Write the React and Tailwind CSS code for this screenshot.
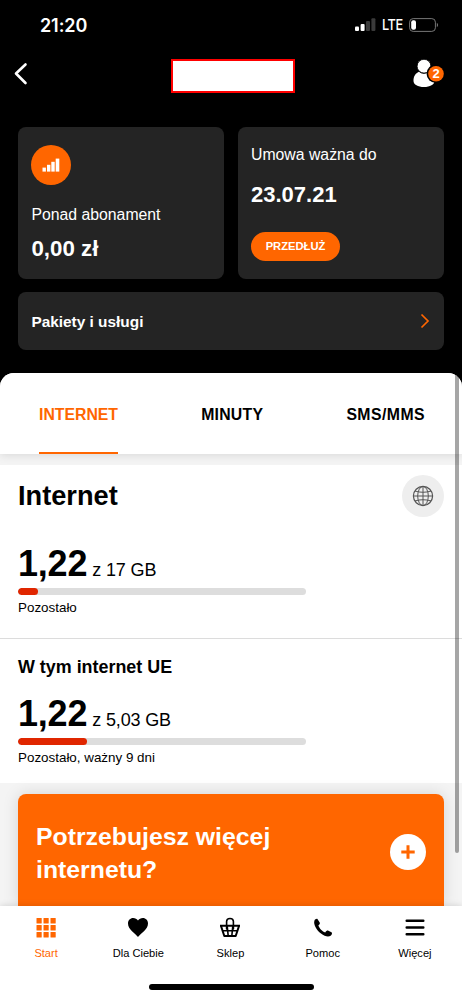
import { useState } from 'react'

const tabs = [
  { id: 'internet', label: 'INTERNET', spacing: 'tracking-[0]' },
  { id: 'minuty', label: 'MINUTY', spacing: 'tracking-[0.25px]' },
  { id: 'sms', label: 'SMS/MMS', spacing: 'tracking-[0.45px]' },
]

const SignalIcon = () => (
  <svg width="21" height="14" viewBox="0 0 21 14">
    <rect x="0" y="8.5" width="4" height="4.5" rx="1" fill="#fff" />
    <rect x="5.6" y="6" width="4" height="7" rx="1" fill="#fff" />
    <rect x="11" y="3" width="4" height="10" rx="1" fill="#3a3a3a" />
    <rect x="16.4" y="0.2" width="4" height="12.8" rx="1" fill="#3a3a3a" />
  </svg>
)

const BatteryIcon = () => (
  <svg width="30" height="14" viewBox="0 0 30 14">
    <rect x="0.6" y="0.6" width="25.8" height="12.8" rx="3.6" fill="none" stroke="#777" />
    <rect x="2.2" y="2.2" width="4.8" height="9.6" rx="2" fill="#fff" />
    <path d="M27.8 4.8c1.7.8 1.7 3.6 0 4.4z" fill="#777" />
  </svg>
)

const ProfileIcon = () => (
  <svg width="34" height="30" viewBox="0 0 34 30">
    <path d="M0.5 22c0-5 2-7.6 5.4-9.3 2.8 2.6 7.3 2.6 10 0C19.5 14.5 21.5 17 21.5 22c0 3.5-4.5 6-10.5 6S0.5 25.5 0.5 22z" fill="#fff" />
    <circle cx="11" cy="7.2" r="6.9" fill="#fff" stroke="#000" strokeWidth="0.8" />
    <circle cx="23" cy="14.7" r="9.4" fill="#000" />
    <circle cx="23" cy="14.7" r="7.8" fill="#ff6600" />
  </svg>
)

const GlobeIcon = () => (
  <svg width="22" height="22" viewBox="0 0 22 22" fill="none" stroke="#555" strokeWidth="1">
    <circle cx="11" cy="11" r="9.6" strokeWidth="1.2" />
    <ellipse cx="11" cy="11" rx="5.3" ry="9.6" />
    <path d="M11 1.4v19.2M1.4 11h19.2M3 6c4.5 1.7 11.5 1.7 16 0M3 16c4.5-1.7 11.5-1.7 16 0" />
  </svg>
)

const GridIcon = () => (
  <svg width="22" height="22" viewBox="0 0 22 22" fill="currentColor">
    {[1, 8, 15].map((y) =>
      [1.5, 8.5, 15.5].map((x) => (
        <rect key={`${x}-${y}`} x={x} y={y} width="5.2" height="5.4" rx="0.5" />
      ))
    )}
  </svg>
)

const HeartIcon = () => (
  <svg width="22" height="22" viewBox="0 0 22 22" fill="currentColor">
    <path d="M11 20C8.5 16.5 1 12.5 1 6.5 1 3.3 3.3 1 6.1 1 8.2 1 10 2 11 3.5 12 2 13.8 1 15.9 1 18.7 1 21 3.3 21 6.5 21 12.5 13.5 16.5 11 20z" />
  </svg>
)

const BasketIcon = () => (
  <svg width="22" height="22" viewBox="0 0 22 22" fill="none" stroke="currentColor" strokeWidth="1.6" strokeLinejoin="round">
    <path strokeWidth="2" d="M1 8.7h20M2 9l3.3 10h11.4L20 9" />
    <path d="M3.4 13.7h15.2M8.2 9l1 10M13.8 9l-1 10" />
    <path d="M7.6 12V4.5C7.6 2.6 9 1.5 11 1.5s3.4 1.1 3.4 3V12" strokeLinecap="round" />
  </svg>
)

const PhoneIcon = () => (
  <svg width="22" height="22" viewBox="0 0 22 22" fill="currentColor">
    <path d="M2.4 3.7C3 2.3 4.8 1.3 5.6 2.2l2.1 3.2c.6 1-.2 1.9-1.3 2.9.8 3.2 4 6.3 6.8 7.2 1.2-1.8 2.2-2.3 3.2-1.8l3.1 1.5c1.1.6.3 2.7-.9 3.6-2 1.6-6 .8-9.6-2.2C4.6 13.2 1.2 7.2 2.4 3.7z" />
  </svg>
)

const MenuIcon = () => (
  <svg width="22" height="22" viewBox="0 0 22 22" stroke="currentColor" strokeWidth="2.5" strokeLinecap="round">
    <path d="M2.7 3.8h16.6M2.7 10.5h16.6M2.7 17.2h16.6" />
  </svg>
)

const navItems = [
  { label: 'Start', icon: GridIcon },
  { label: 'Dla Ciebie', icon: HeartIcon },
  { label: 'Sklep', icon: BasketIcon },
  { label: 'Pomoc', icon: PhoneIcon },
  { label: 'Więcej', icon: MenuIcon },
]

const Usage = ({ value, total, percent, note }) => (
  <div>
    <p className="flex h-[44px] items-baseline text-[36px] leading-[40px] font-bold tracking-[-0.2px]">
      {value}
      <span className="ml-[5px] text-[18px] font-normal tracking-[-0.15px]">{total}</span>
    </p>
    <div className="h-[7px] w-[288px] overflow-hidden rounded-full bg-[#dddddd]">
      <div className="h-full rounded-full bg-[#e02600]" style={{ width: `${percent}%` }} />
    </div>
    <p className="mt-[4px] text-[13.4px] leading-[18px]">{note}</p>
  </div>
)

const App = () => {
  const [activeTab, setActiveTab] = useState('internet')
  const [activeNav, setActiveNav] = useState('Start')

  return (
    <div className="relative flex h-[999px] w-[462px] flex-col overflow-hidden bg-black font-['Liberation_Sans',sans-serif] text-black">
      {/* Status bar */}
      <div className="flex h-[50px] shrink-0 items-center justify-between pr-[23px] pl-[40px] text-white">
        <span className="pt-px font-['Inter',sans-serif] text-[18px] font-semibold tracking-[-0.1px]">21:20</span>
        <div className="flex items-center">
          <SignalIcon />
          <span className="mr-[6px] ml-[6px] w-[21px] origin-left scale-x-[0.85] pt-px font-['Inter',sans-serif] text-[15px] font-medium tracking-[-0.5px] whitespace-nowrap">LTE</span>
          <BatteryIcon />
        </div>
      </div>

      {/* Header */}
      <header className="flex h-[77px] shrink-0 items-start justify-between pr-[11px] pl-[13px] text-white">
        <button aria-label="Wstecz" className="mt-[12px] w-[38px]">
          <svg width="16" height="24" viewBox="0 0 16 24" fill="none" stroke="#fff" strokeWidth="2.6" strokeLinecap="round" strokeLinejoin="round">
            <path d="M12.5 2.5L3 11.5l9.5 9.5" />
          </svg>
        </button>
        <div className="mt-[9px] ml-[2px] h-[34px] w-[124px] border-2 border-[#ff0000] bg-white" />
        <button aria-label="Profil" className="relative mt-[9px] w-[38px]">
          <ProfileIcon />
          <span className="absolute top-[7px] left-[19px] w-[8px] text-center text-[13px] leading-[16px] font-bold">2</span>
        </button>
      </header>

      {/* Account cards */}
      <section className="shrink-0 px-[18px] text-white">
        <div className="grid grid-cols-2 gap-[14px]">
          <div className="h-[152px] rounded-lg bg-[#242424] px-[13.4px] pt-[18px]">
            <div className="flex h-[40px] w-[40px] items-center justify-center rounded-full bg-[#ff6600]">
              <svg width="18" height="14" viewBox="0 0 18 14" fill="#fff">
                <rect x="0.5" y="9.6" width="3.4" height="4" />
                <rect x="5" y="6.8" width="3.4" height="6.8" />
                <rect x="9.3" y="3.8" width="3.4" height="9.8" />
                <rect x="13.7" y="0.6" width="3.6" height="13" />
              </svg>
            </div>
            <p className="mt-[20px] text-[15.8px] leading-[20px]">Ponad abonament</p>
            <p className="mt-[11px] text-[22.3px] leading-[26px] font-bold">0,00 zł</p>
          </div>
          <div className="h-[152px] rounded-lg bg-[#242424] px-[13px] pt-[18px]">
            <p className="text-[15.8px] leading-[20px]">Umowa ważna do</p>
            <p className="mt-[17px] text-[22px] leading-[26px] font-bold">23.07.21</p>
            <button className="mt-[24px] flex h-[29px] w-[89px] items-center justify-center rounded-full bg-[#ff6600] text-[11.2px] font-bold">
              PRZEDŁUŻ
            </button>
          </div>
        </div>
        <button className="mt-[13px] flex h-[58px] w-full items-center justify-between rounded-lg bg-[#242424] pr-[14px] pl-[13.4px]">
          <span className="pt-[2px] text-[15.4px] font-bold">Pakiety i usługi</span>
          <svg width="10" height="16" viewBox="0 0 10 16" fill="none" stroke="#ff6600" strokeWidth="1.7">
            <path d="M1.5 1.5L8 8l-6.5 6.5" />
          </svg>
        </button>
      </section>

      {/* Usage sheet */}
      <main className="mt-[23px] flex min-h-0 flex-1 flex-col overflow-hidden rounded-t-[14px] bg-[#f4f4f4]">
        <div className="z-10 flex h-[81px] shrink-0 justify-between bg-white pr-[37px] pl-[39px] shadow-[0_1px_9px_rgba(0,0,0,0.12)]">
          {tabs.map((tab) => (
            <button
              key={tab.id}
              onClick={() => setActiveTab(tab.id)}
              className={`border-b-[2.5px] pt-[5px] text-[15.8px] font-bold ${tab.spacing} ${activeTab === tab.id ? 'border-[#ff6600] text-[#ff6600]' : 'border-transparent'}`}
            >
              {tab.label}
            </button>
          ))}
        </div>

        <section className="mt-[11px] h-[318px] shrink-0 bg-white">
          <div className="h-[174px] border-b border-[#dcdcdc] px-[18px] pt-[10px]">
            <div className="flex h-[42px] items-center justify-between">
              <h1 className="text-[27.2px] font-bold">Internet</h1>
              <div className="flex h-[42px] w-[42px] items-center justify-center rounded-full bg-[#eeeeee]">
                <GlobeIcon />
              </div>
            </div>
            <div className="mt-[27px]">
              <Usage value="1,22" total="z 17 GB" percent={7} note="Pozostało" />
            </div>
          </div>
          <div className="px-[18px] pt-[17px]">
            <h2 className="text-[17.9px] leading-[22px] font-bold">W tym internet UE</h2>
            <div className="mt-[16px]">
              <Usage value="1,22" total="z 5,03 GB" percent={24} note="Pozostało, ważny 9 dni" />
            </div>
          </div>
        </section>

        <div className="flex-1 px-[18px] pt-[11px]">
          <div className="flex h-full items-start justify-between rounded-t-lg bg-[#ff6600] pr-[18px] pl-[18px] text-white shadow-[0_0_16px_rgba(0,0,0,0.13)]">
            <p className="mt-[26px] w-[270px] text-[24.8px] leading-[33px] font-bold">Potrzebujesz więcej internetu?</p>
            <button aria-label="Dokup internet" className="mt-[40px] flex h-[36px] w-[36px] items-center justify-center rounded-full bg-white">
              <svg width="14" height="14" viewBox="0 0 14 14" stroke="#ff6600" strokeWidth="3">
                <path d="M7 0.3v13.4M0.3 7h13.4" />
              </svg>
            </button>
          </div>
        </div>
      </main>

      {/* Bottom navigation */}
      <nav className="z-10 flex h-[93px] shrink-0 flex-col items-center bg-white shadow-[0_-1px_6px_rgba(0,0,0,0.12)]">
        <div className="grid w-full grid-cols-5 pr-[1px]">
          {navItems.map(({ label, icon: Icon }) => (
            <button
              key={label}
              onClick={() => setActiveNav(label)}
              className={`flex flex-col items-center pt-[11px] text-[11.1px] leading-[14px] ${activeNav === label ? 'text-[#ff6600]' : 'text-black'}`}
            >
              <Icon />
              <span className="mt-[7px]">{label}</span>
            </button>
          ))}
        </div>
        <div className="mt-[24px] h-[6px] w-[165px] rounded-full bg-black" />
      </nav>

      {/* Scroll indicator */}
      <div className="absolute top-[374px] right-[3px] z-20 h-[479px] w-[4px] rounded-b-full bg-black/35" />
    </div>
  )
}

export default App
